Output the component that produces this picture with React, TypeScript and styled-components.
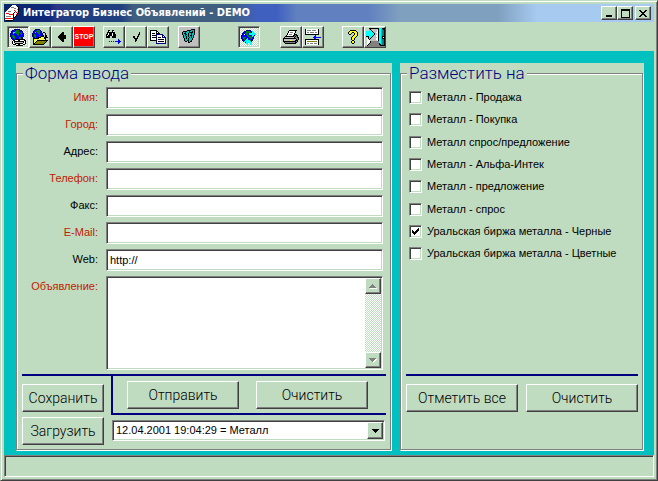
import React from "react";
import styled, { createGlobalStyle, css } from "styled-components";

const face = "#c0dcc0";
const grey = "#808080";
const dark = "#404040";
const navy = "#000080";
const teal = "#00c0c0";
const uiFont = '"Liberation Sans", Arial, sans-serif';

const raised = css`
  border: 1px solid;
  border-color: #fff ${dark} ${dark} #fff;
  box-shadow: inset -1px -1px 0 ${grey};
`;
const sunken = css`
  border: 1px solid;
  border-color: ${grey} #fff #fff ${grey};
  box-shadow: inset 1px 1px 0 ${dark}, inset -1px -1px 0 ${face};
`;
const hatch = css`
  background: repeating-conic-gradient(#fff 0 25%, ${face} 0 50%) 0 0 / 2px 2px;
`;

const GlobalStyle = createGlobalStyle`
  *, *::before, *::after { box-sizing: border-box; }
  body { margin: 0; background: ${face}; font: 11px/13px ${uiFont}; color: #000; }
  button, input, textarea, select { font: inherit; color: inherit; border-radius: 0; margin: 0; }
`;

const Window = styled.div`
  min-height: 100vh;
  display: flex;
  flex-direction: column;
  background: ${face};
  border: 1px solid;
  border-color: ${face} ${dark} ${dark} ${face};
  box-shadow: inset 1px 1px 0 #fff, inset -1px -1px 0 ${grey};
  padding: 3px;
`;

const TitleBar = styled.header`
  display: flex;
  align-items: center;
  height: 18px;
  padding: 0 3px 0 1px;
  background: linear-gradient(
    90deg,
    #0a246a 0%, #10287c 7%, #2a3488 8%, #204080 10%, #204080 18%,
    #405f80 20%, #405f80 35%, #4060c0 39%, #4060c0 42%,
    #6080c0 45%, #6080c0 56%, #80a0c0 61%, #80a0c0 76%, #a6caf0 82%
  );
`;
const Title = styled.h1`
  flex: 1;
  min-width: 0;
  margin: 0 0 0 2px;
  overflow: hidden;
  white-space: nowrap;
  color: #fff;
  font: bold 11px/18px "DejaVu Sans Condensed", "DejaVu Sans", sans-serif;
`;
const Captions = styled.div`
  display: flex;
`;
const CaptionButton = styled.button<{ $apart?: boolean }>`
  ${raised}
  display: grid;
  place-items: center;
  width: 16px;
  height: 14px;
  padding: 0;
  margin-left: ${(p) => (p.$apart ? "2px" : "0")};
  background: ${face};
`;

const ToolBar = styled.div`
  display: flex;
  padding: 4px 3px 3px;
`;
const ToolGroup = styled.div<{ $gap: number }>`
  display: flex;
  margin-right: ${(p) => p.$gap}px;
`;
const ToolButton = styled.button<{ $tone?: "pressed" | "grey" | "stop" }>`
  ${raised}
  display: grid;
  place-items: center;
  width: 22px;
  height: 22px;
  padding: 0;
  background: ${face};
  ${(p) => p.$tone === "grey" && "background: #c0c0c0;"}
  ${(p) =>
    p.$tone === "stop" &&
    css`
      background: #f00;
      color: #fff;
      font: 8px/18px "Liberation Sans Narrow", "DejaVu Sans Condensed", sans-serif;
      font-family: "Liberation Sans Narrow", "Liberation Sans", sans-serif;
    `}
  ${(p) =>
    p.$tone === "pressed" &&
    css`
      ${sunken}
      ${hatch}
    `}
`;

const StopText = styled.span`
  font-size: 7px;
  font-weight: bold;
`;

const Desk = styled.main`
  flex: 1;
  display: grid;
  grid-template-columns: minmax(0, 376fr) minmax(0, 244fr);
  gap: 8px;
  padding: 12px 10px 4px 12px;
  background: ${teal};
`;
const Panel = styled.section`
  display: flex;
  background: ${face};
`;
const Frame = styled.fieldset`
  flex: 1;
  min-width: 0;
  display: flex;
  flex-direction: column;
  margin: 0 1px 1px 0;
  padding: 3px 4px 4px 5px;
  border: 1px solid ${grey};
  box-shadow: 1px 1px 0 #fff, inset 1px 1px 0 #fff;
`;
const Legend = styled.legend`
  padding: 0 2px;
  margin-left: 1px;
  background: ${face};
  color: ${navy};
  font: 300 17px/21px Roboto, ${uiFont};
`;

const Fields = styled.div`
  display: grid;
  grid-template-columns: 76px minmax(0, 1fr);
  gap: 5px 8px;
  padding-right: 3px;
`;
const FieldLabel = styled.label<{ $required?: boolean }>`
  padding-top: 4px;
  text-align: right;
  color: ${(p) => (p.$required ? "#c02000" : "#000")};
`;
const TextInput = styled.input`
  ${sunken}
  width: 100%;
  height: 22px;
  padding: 0 3px;
  background: #fff;
  outline: none;
`;
const MemoBox = styled.div`
  ${sunken}
  display: flex;
  height: 94px;
  padding: 1px;
  background: #fff;
`;
const Memo = styled.textarea`
  flex: 1;
  min-width: 0;
  padding: 2px;
  border: 0;
  outline: none;
  resize: none;
  overflow: hidden;
  background: transparent;
`;
const ScrollTrack = styled.div`
  ${hatch}
  display: flex;
  flex-direction: column;
  justify-content: space-between;
`;
const ArrowButton = styled.button`
  ${raised}
  display: grid;
  place-items: center;
  width: 16px;
  height: 16px;
  padding: 0;
  background: ${face};
`;

const Rule = styled.hr`
  width: 100%;
  height: 2px;
  margin: 4px 0 0;
  border: 0;
  background: ${navy};
`;
const Actions = styled.div`
  display: grid;
  grid-template-columns: 82px minmax(0, 1fr);
  column-gap: 7px;
`;
const Storage = styled.div`
  display: grid;
  gap: 5px;
  padding-top: 8px;
`;
const SendArea = styled.div`
  display: flex;
  flex-direction: column;
  gap: 5px;
`;
const SendBox = styled.div`
  display: grid;
  grid-template-columns: 1fr 1fr;
  gap: 17px;
  padding: 5px 18px 4px 14px;
  border: solid ${navy};
  border-width: 0 0 2px 2px;
`;
const PushButton = styled.button`
  ${raised}
  height: 28px;
  padding: 0;
  white-space: nowrap;
  background: ${face};
  font: 300 14px/24px Roboto, ${uiFont};
`;
const Combo = styled.div`
  ${sunken}
  position: relative;
  height: 21px;
  margin: 0 1px;
  background: #fff;
`;
const Select = styled.select`
  appearance: none;
  width: 100%;
  height: 19px;
  padding: 0 20px 0 3px;
  border: 0;
  outline: none;
  background: transparent;
`;
const ComboArrow = styled.span`
  ${raised}
  position: absolute;
  top: 1px;
  right: 1px;
  bottom: 1px;
  width: 16px;
  display: grid;
  place-items: center;
  background: ${face};
  pointer-events: none;
`;

const CheckList = styled.ul`
  margin: 0;
  padding: 0 3px;
  list-style: none;
`;
const CheckRow = styled.li`
  height: 22px;
  padding-top: 4px;
  &:nth-child(3n + 2) {
    height: 23px;
  }
`;
const CheckLabel = styled.label`
  display: flex;
  gap: 5px;
  white-space: nowrap;
`;
const CheckBox = styled.input`
  ${sunken}
  appearance: none;
  flex: none;
  width: 13px;
  height: 13px;
  background: #fff;
  &:checked {
    background: #fff
      url("data:image/svg+xml,%3Csvg xmlns='http://www.w3.org/2000/svg' width='7' height='7' shape-rendering='crispEdges'%3E%3Cpath d='M0 2h1v1h1v1h1v-1h1v-1h1v-1h1v-1h1v3h-1v1h-1v1h-1v1h-1v1h-1v-1h-1v-1h-1z'/%3E%3C/svg%3E")
      center / 7px 7px no-repeat;
  }
`;
const TargetActions = styled.div`
  margin-top: auto;
  padding-bottom: 33px;
`;
const ButtonPair = styled.div`
  display: grid;
  grid-template-columns: 1fr 1fr;
  gap: 8px;
  padding-top: 8px;
`;
const StatusBar = styled.footer`
  height: 22px;
  ${sunken}
`;

const palette: Record<string, string> = {
  k: "#000", w: "#fff", b: "#0000ff", n: "#000080", g: "#008000", c: "#00ffff",
  t: "#008080", y: "#ffff00", o: "#808000", s: "#c0c0c0", d: "#808080",
  r: "#ff0000", m: "#800000", l: "#ffff80", a: "#00c0c0",
};

/* Draws a bitmap icon: one character per pixel, "." is transparent. */
function PixelIcon({ rows }: { rows: string[] }) {
  const width = Math.max(...rows.map((r) => r.length));
  const runs: React.ReactNode[] = [];
  rows.forEach((row, y) => {
    for (const m of row.matchAll(/([a-z])\1*/g)) {
      runs.push(
        <rect key={`${m.index}-${y}`} x={m.index} y={y} width={m[0].length} height={1} fill={palette[m[1]]} />
      );
    }
  });
  return (
    <svg width={width} height={rows.length} shapeRendering="crispEdges" aria-hidden="true">
      {runs}
    </svg>
  );
}

const icons = {
  app: [
    ".......wwww.....",
    "......wwwwwwk...",
    ".....wdddwwwwk..",
    "....wwwwwddwwk..",
    "...wwwwwwwwwdk..",
    "..wwwwwwwrwwwk..",
    ".wwdddwwwwrwsk..",
    "wwwwwwwwwkwrsk..",
    "wrrrwwwwkwwwk...",
    "wwwwrrrrkwwrk...",
    "wwwwwwwwkwwk....",
    "wdddddwwkwk.....",
    "wwwwwwwwkk......",
    "rrrrrrrrk.......",
    "wwwwwwwwk.......",
    ".kkkkkkk........",
  ],
  link: [
    "....nnnnnn......",
    "..nnbbgggbnn....",
    ".nbbbggggbbbn...",
    ".nbccgggggbgn...",
    "nbbcbbgggbggbn..",
    "nbbbbbbggbbgbn..",
    "nbggbbbbgbbbbn..",
    "nbgggbbbbbbbbn..",
    ".nbggbbbbggbn...",
    ".nbbgbbbbggbn...",
    "..nnbkkkkkkkkkk.",
    "...kkwwwkkwwwwkk",
    "..kwkkkkkkkkkkwk",
    "..kwksssssssskwk",
    "..kwwkkkkkkkkwwk",
    "...kkkwwkkwwwkk.",
    "......kkkkkkk...",
  ],
  open: [
    "...nnnnn........",
    "..nbbgggn.......",
    ".nbbggggbn......",
    ".nbcbgggbn.kk...",
    "nbbbbbggbbn..k..",
    "nbgbbbbgbbn..k..",
    "nbggbbbbbbnk.kk.",
    "nbggbbbggkkk.kk.",
    ".nbgbbkkklllkkkk",
    ".nkkkkklylylkk..",
    ".kyylylylylylk..",
    ".klylkkkkkkkkkkk",
    ".kylkoooooooook.",
    ".klkoooooooook..",
    ".kkoooooooook...",
    ".kkkkkkkkkkk....",
  ],
  back: [
    "....kk..",
    "...kkk..",
    "..kkkk..",
    ".kkkkkkk",
    "kkkkkkkk",
    "kkkkkkkk",
    ".kkkkkkk",
    "..kkkk..",
    "...kkk..",
    "....kk..",
  ],
  find: [
    "..kk..kk........",
    "..kw..kw........",
    ".kkkkkkkk.......",
    ".kwkkkwkk.......",
    "kkwkkkwkkk......",
    "kwkkkkwkkk......",
    "kkkk..kkkk......",
    "kkkk..kkkk......",
    "................",
    "............b...",
    "............bb..",
    "...b.b.b.bbbbbb.",
    "............bb..",
    "............b...",
  ],
  check: [
    "......k",
    "......k",
    ".....kk",
    ".....k.",
    "kk..kk.",
    "kk..k..",
    ".kkkk..",
    "..kk...",
    "..kk...",
    "..k....",
  ],
  copy: [
    "kkkkkkk.........",
    "kwwwwwkk........",
    "kwwwwwkwk.......",
    "kwkkkwkkkk......",
    "kwwwwwnnnnnnn...",
    "kwkkkknwwwwwnn..",
    "kwwwwwnwwwwwnwn.",
    "kwkkkknwkkkwnnnn",
    "kwwwwwnwwwwwwwwn",
    "kwwwwwnwkkkkkkwn",
    "kkkkkknwwwwwwwwn",
    "......nwkkkkkkwn",
    "......nwwwwwwwwn",
    "......nnnnnnnnnn",
  ],
  book: [
    ".........kkkk..",
    ".....kkkkaaak..",
    ".kkkkaakaakak..",
    "kaakaaakkkkak..",
    "kakkaakaakaak..",
    "kaakkakaakaak..",
    ".kakaakakkak...",
    ".kaakakaakak...",
    ".kaakaakakak...",
    "..kakakaaak....",
    "..kaaakaaak....",
    "..kaakkaak.....",
    "...kk.kakk.....",
    "......kk.......",
    "...............",
    "...............",
  ],
  refresh: [
    ".....nnnnn......",
    "...nnggggbnc....",
    "..nbbgggggbcc...",
    ".nbbgggbccccccc.",
    ".nbwbggbccccccc.",
    "nbbbbbggbbbccn..",
    "nbbbbbbggggcn...",
    "nbgggbbbgggbn...",
    "nbggbbcbbggbn...",
    ".nbgbccbbbbn....",
    ".nbbcccccgbn....",
    "..ncccccccn.....",
    "....bcccccc.....",
    ".....cc..cc.....",
    "......c..cc.....",
  ],
  print: [
    "......kkkkkkkk..",
    ".....kwwwwwwk...",
    ".....kwdddwwk...",
    "....kwwwwwwk....",
    "....kwdddwwkkk..",
    "...kwwwwwwkkdkk.",
    "..kkkkkkkkkdkdk.",
    ".kssssssssskddkk",
    "kkkkkkkkkkkkkddk",
    "ksssssssssssskdk",
    "kssssssyyssskkk.",
    "kkkkkkkkkkkkkdk.",
    ".kddddddddddkk..",
    "..kkkkkkkkkkk...",
  ],
  split: [
    "kwwwwwwwwwwwwk..",
    "kwddddwddddwwk..",
    "kwwwwwwwwwwwwk..",
    "kwddwddddwddwk..",
    "kwwwwwwwwwwwwk..",
    "kkkkkkkkkkkkkk..",
    "..........b.....",
    ".........bb.....",
    "........bbbbbbbb",
    ".........bb.....",
    "kkkkkkkkkkbkkk..",
    "kwwwwwwwwwwwwk..",
    "kwoooooooooowk..",
    "kwwwwwwwwwwwwk..",
    "kwddwdddwdddwk..",
    "kwwwwwwwwwwwwk..",
  ],
  help: [
    "..kkkkkk..",
    ".kyyyyyyk.",
    "kyyykkyyyk",
    "kyyk..kyyk",
    ".kk...kyyk",
    ".....kyyyk",
    "....kyyyk.",
    "...kyyyk..",
    "...kyyk...",
    "...kyyk...",
    "....kk....",
    "...kyyk...",
    "...kyyk...",
    "....kk....",
  ],
  exit: [
    "...kkkkkkkkkkccckkk",
    "...ckssssssskccatkk",
    "...cckssssswkccattk",
    "ccccccksssswkccattk",
    "cccccccksswwkccattk",
    "ccccccccksswkccattk",
    "ccccccccksswkccattk",
    "cccccccksswwkccattk",
    "kkkccckssswwkccakkk",
    "..kcckssssswkccakwk",
    ".wkckssssswwkccakkk",
    ".wwksssssswwkccattk",
    ".wwwssssssswkccattk",
    ".wwwkddddddddccattk",
    ".wwwkddddddddccattk",
    ".wwkdddddddddkcattk",
    ".wkddddddddddkkattk",
    ".kddddddddddddkkkkk",
  ],
  minimize: ["........", "........", "........", "........", "........", "........", ".kkkkkk.", ".kkkkkk."],
  maximize: [
    "kkkkkkkkk", "kkkkkkkkk", "k.......k", "k.......k", "k.......k", "k.......k", "k.......k", "k.......k", "kkkkkkkkk",
  ],
  close: ["kk....kk", ".kk..kk.", "..kkkk..", "...kk...", "..kkkk..", ".kk..kk.", "kk....kk"],
  up: ["...d....", "..ddd...", ".ddddd..", "ddddddd.", ".wwwwwww"],
  down: ["ddddddd.", ".dddddww", "..dddww.", "...dww..", "....w..."],
  drop: ["kkkkkkk", ".kkkkk.", "..kkk..", "...k..."],
};

const toolGroups: { gap: number; tools: { name: string; icon?: keyof typeof icons; tone?: "pressed" | "grey" | "stop" }[] }[] = [
  {
    gap: 8,
    tools: [
      { name: "Соединение", icon: "link", tone: "pressed" },
      { name: "Открыть", icon: "open" },
      { name: "Назад", icon: "back" },
      { name: "STOP", tone: "stop" },
    ],
  },
  {
    gap: 9,
    tools: [
      { name: "Найти", icon: "find" },
      { name: "Проверить", icon: "check" },
      { name: "Копировать", icon: "copy" },
    ],
  },
  { gap: 38, tools: [{ name: "Справочник", icon: "book", tone: "grey" }] },
  { gap: 20, tools: [{ name: "Обновить", icon: "refresh", tone: "pressed" }] },
  {
    gap: 18,
    tools: [
      { name: "Печать", icon: "print" },
      { name: "Разделить", icon: "split" },
    ],
  },
  {
    gap: 0,
    tools: [
      { name: "Помощь", icon: "help" },
      { name: "Выход", icon: "exit" },
    ],
  },
];

const fields = [
  { id: "name", label: "Имя:", required: true },
  { id: "city", label: "Город:", required: true },
  { id: "address", label: "Адрес:" },
  { id: "phone", label: "Телефон:", required: true },
  { id: "fax", label: "Факс:" },
  { id: "email", label: "E-Mail:", required: true },
  { id: "web", label: "Web:", value: "http://" },
];

const targets = [
  "Металл - Продажа",
  "Металл - Покупка",
  "Металл спрос/предложение",
  "Металл - Альфа-Интек",
  "Металл - предложение",
  "Металл - спрос",
  "Уральская биржа металла - Черные",
  "Уральская биржа металла - Цветные",
];

export default function App() {
  return (
    <>
      <GlobalStyle />
      <Window>
        <TitleBar>
          <PixelIcon rows={icons.app} />
          <Title>Интегратор Бизнес Объявлений - DEMO</Title>
          <Captions>
            <CaptionButton aria-label="Свернуть"><PixelIcon rows={icons.minimize} /></CaptionButton>
            <CaptionButton aria-label="Развернуть"><PixelIcon rows={icons.maximize} /></CaptionButton>
            <CaptionButton aria-label="Закрыть" $apart><PixelIcon rows={icons.close} /></CaptionButton>
          </Captions>
        </TitleBar>

        <ToolBar role="toolbar">
          {toolGroups.map((group, i) => (
            <ToolGroup key={i} $gap={group.gap}>
              {group.tools.map((t) => (
                <ToolButton key={t.name} aria-label={t.name} $tone={t.tone}>
                  {t.icon ? <PixelIcon rows={icons[t.icon]} /> : <StopText>{t.name}</StopText>}
                </ToolButton>
              ))}
            </ToolGroup>
          ))}
        </ToolBar>

        <Desk>
          <Panel>
            <Frame>
              <Legend>Форма ввода</Legend>
              <Fields>
                {fields.map((f) => (
                  <React.Fragment key={f.id}>
                    <FieldLabel htmlFor={f.id} $required={f.required}>{f.label}</FieldLabel>
                    <TextInput id={f.id} defaultValue={f.value} />
                  </React.Fragment>
                ))}
                <FieldLabel htmlFor="memo" $required>Объявление:</FieldLabel>
                <MemoBox>
                  <Memo id="memo" />
                  <ScrollTrack>
                    <ArrowButton aria-label="Вверх"><PixelIcon rows={icons.up} /></ArrowButton>
                    <ArrowButton aria-label="Вниз"><PixelIcon rows={icons.down} /></ArrowButton>
                  </ScrollTrack>
                </MemoBox>
              </Fields>
              <Rule />
              <Actions>
                <Storage>
                  <PushButton>Сохранить</PushButton>
                  <PushButton>Загрузить</PushButton>
                </Storage>
                <SendArea>
                  <SendBox>
                    <PushButton>Отправить</PushButton>
                    <PushButton>Очистить</PushButton>
                  </SendBox>
                  <Combo>
                    <Select aria-label="Сохранённые объявления">
                      <option>12.04.2001 19:04:29 = Металл</option>
                    </Select>
                    <ComboArrow><PixelIcon rows={icons.drop} /></ComboArrow>
                  </Combo>
                </SendArea>
              </Actions>
            </Frame>
          </Panel>

          <Panel>
            <Frame>
              <Legend>Разместить на</Legend>
              <CheckList>
                {targets.map((t) => (
                  <CheckRow key={t}>
                    <CheckLabel>
                      <CheckBox type="checkbox" defaultChecked={t.endsWith("Черные")} />
                      {t}
                    </CheckLabel>
                  </CheckRow>
                ))}
              </CheckList>
              <TargetActions>
                <Rule />
                <ButtonPair>
                  <PushButton>Отметить все</PushButton>
                  <PushButton>Очистить</PushButton>
                </ButtonPair>
              </TargetActions>
            </Frame>
          </Panel>
        </Desk>
        <StatusBar />
      </Window>
    </>
  );
}
